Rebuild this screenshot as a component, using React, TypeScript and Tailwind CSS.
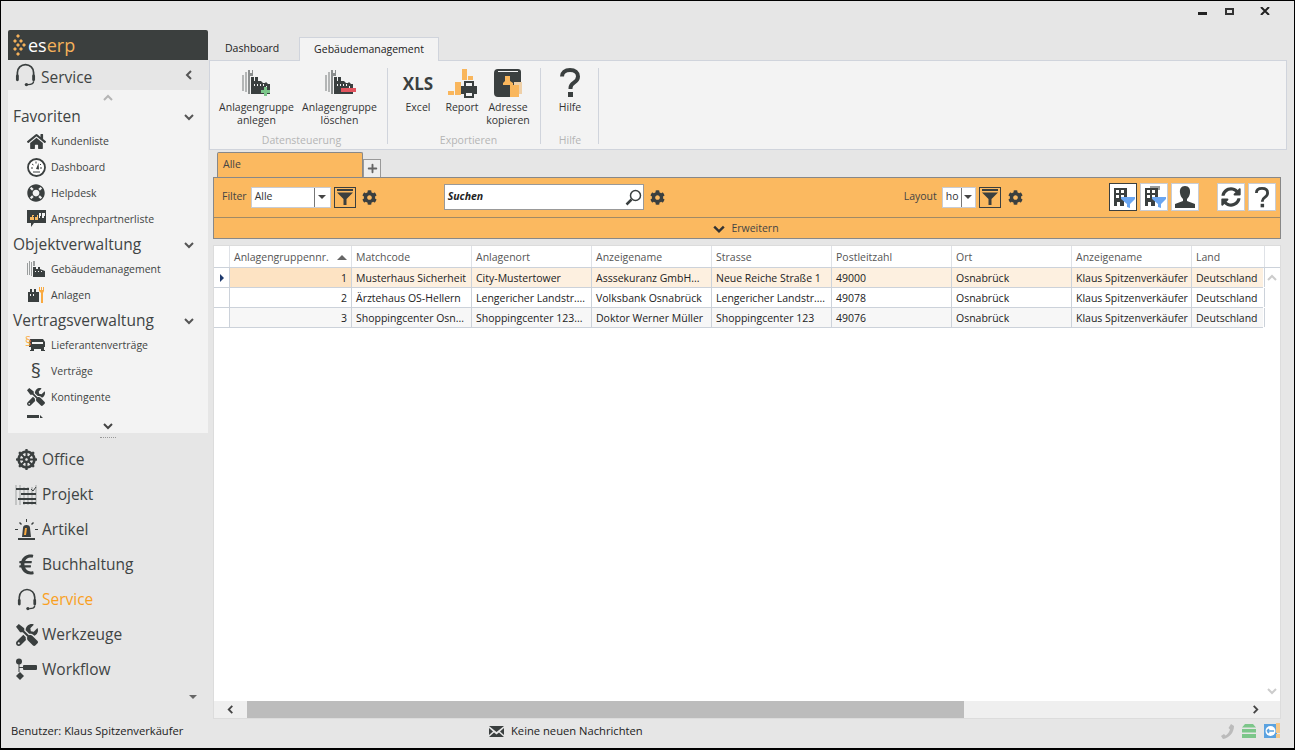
import type { ReactNode } from "react";
import { Plus } from "lucide-react";
import { FaCog, FaDharmachakra, FaEuroSign, FaHome, FaLifeRing, FaSyncAlt, FaTools } from "react-icons/fa";

const DARK = "#3a3f3f";
const ORANGE = "#fbb960";

const Chevron = ({ dir = "down", color = "#555", size = 10 }: { dir?: "down" | "up" | "left" | "right"; color?: string; size?: number }) => {
  const d = { down: "M1 3l4 4 4-4", up: "M1 7l4-4 4 4", left: "M7 1L3 5l4 4", right: "M3 1l4 4-4 4" }[dir];
  return (
    <svg width={size} height={size} viewBox="0 0 10 10" fill="none" stroke={color} strokeWidth="2">
      <path d={d} />
    </svg>
  );
};

const Headset = ({ size = 22, color = DARK }: { size?: number; color?: string }) => (
  <svg width={size} height={size * 1.150} viewBox="0 0 22 25" fill="none" stroke={color}>
    <path d="M2.500 14V10a8.500 8.500 0 0 1 17 0v4" strokeWidth="1.800" />
    <path d="M19.500 19q0 3.500-6 3.500" strokeWidth="1.500" />
    <rect x="1" y="12" width="3" height="7" rx="1.500" fill={color} stroke="none" />
    <rect x="18" y="12" width="3" height="7" rx="1.500" fill={color} stroke="none" />
    <circle cx="12" cy="22.500" r="1.800" fill={color} stroke="none" />
  </svg>
);

const HelpMark = ({ width, height }: { width: number; height: number }) => (
  <svg width={width} height={height} viewBox="0 0 20 30" fill="none" stroke={DARK}>
    <path d="M2 8.500C2 4.500 5 2 10 2s8 2.500 8 6.500c0 3-1.500 4.500-4 6.200-2.300 1.500-3.500 2.800-3.500 5.300v1" strokeWidth="4" />
    <path d="M8 24h5v5H8z" fill={DARK} stroke="none" />
  </svg>
);

const Factory = ({ accent }: { accent?: ReactNode }) => (
  <svg width="32" height="29" viewBox="0 0 32 29">
    <path d="M1 6h2v16H1zM4 3h2v20H4z" fill="#b4b6b6" />
    <path d="M7 1h2v3h2V1h1v6H9v18H7z" fill="#8b8e8e" />
    <path d="M10 8h3v4h1V8h3v4h3l2 2h2l1-1 2 2h2v10H10z" fill={DARK} />
    <path d="M13 15h1v2h-1zM16 15h1v2h-1zM19 15h1v2h-1zM22 15h1v2h-1zM25 17h1v2h-1z" fill="#f3f3f3" />
    {accent}
  </svg>
);

const SmallFactory = () => (
  <svg width="20" height="18" viewBox="0 0 20 18">
    <path d="M1 3h1v12H1zM3 1h1v14H3zM5 2h1v14H5zM7 1h2v5H7z" fill="#9a9d9d" />
    <path d="M7 7h3v2h2V7h2v2l5 2v6H7z" fill={DARK} />
    <path d="M9 11h1v1H9zM12 11h1v1h-1zM15 11h1v1h-1z" fill="#f3f3f3" />
  </svg>
);

const Funnel = ({ size = 16, color = DARK }: { size?: number; color?: string }) => (
  <svg width={size} height={size} viewBox="0 0 16 16">
    <path d="M0 0h16v2H0zM0 3.500h16L9.500 10v6h-3v-6z" fill={color} />
  </svg>
);

const FunnelButton = () => (
  <div className="flex h-[21px] w-[22px] items-center justify-center border border-[#3a3f3f]">
    <Funnel />
  </div>
);

const Gear = () => <FaCog size={15} color={DARK} />;

const Dropdown = ({ label, width, arrowWidth }: { label: string; width: string; arrowWidth: string }) => (
  <div className={`flex h-[21px] items-center border border-[#c8ccd4] bg-white text-[10.500px] text-[#333] ${width}`}>
    <span className="flex-1 overflow-hidden pl-[3px]">{label}</span>
    <span className={`flex h-full items-center justify-center border-l border-[#777] ${arrowWidth}`}>
      <span className="h-0 w-0 border-x-[4px] border-t-[4px] border-x-transparent border-t-[#444]" />
    </span>
  </div>
);

const RibbonButton = ({ icon, lines, width }: { icon: ReactNode; lines: string[]; width: string }) => (
  <div className={`flex flex-col items-center ${width}`}>
    <div className="flex h-[30px] items-center justify-center">{icon}</div>
    <div className="mt-[3px] text-center text-[10.500px] leading-[13px] text-[#333]">
      {lines.map((l) => (
        <div key={l}>{l}</div>
      ))}
    </div>
  </div>
);

const RibbonGroup = ({ title, width, children }: { title: string; width: string; children: ReactNode }) => (
  <div className={`relative flex h-[80px] flex-col ${width}`}>
    <div className="flex h-[64px]">{children}</div>
    <div className="text-center text-[10.500px] leading-[16px] text-[#b5b5b5]">{title}</div>
    <span className="absolute bottom-[4px] right-0 top-0 w-px bg-[#d0d4dc]" />
  </div>
);

const navIcon = {
  home: <FaHome size={19} color={DARK} />,
  gauge: (
    <svg width="19" height="19" viewBox="0 0 19 19">
      <circle cx="9.500" cy="9.500" r="8.500" fill="#fff" stroke={DARK} strokeWidth="1.800" />
      <path d="M9 11l2.500-6 0.500 6.500z" fill={DARK} />
      <path d="M4 10h2M5 6l1.500 1M9 3.500v2M14 6l-1 1M13 10h2M6 14h7" stroke={DARK} fill="none" />
    </svg>
  ),
  ring: <FaLifeRing size={18} color={DARK} />,
  quote: (
    <svg width="19" height="18" viewBox="0 0 19 18">
      <path d="M0 0h19v13H7l-3 4v-4H0z" fill={DARK} />
      <path d="M3 7h2V5h2v1H6v1h1v3H3zM8 7h2V5h1v2h0v3H8z" fill={ORANGE} />
      <path d="M12 3h2v3h-1v2h-1zM15 3h3v3h-1v2h-2z" fill="#f3f3f3" />
    </svg>
  ),
  factory: <SmallFactory />,
  plant: (
    <svg width="19" height="18" viewBox="0 0 19 18">
      <path d="M1 6h2V3h2v3h2V3h2v3h3v10H1z" fill={DARK} />
      <path d="M3 8h1v2H3zM6 8h1v2H6z" fill="#f3f3f3" />
      <path d="M13 1v3h1V1h1v3h1V1h1v4l-1 2v10h-2V7l-2-2V1z" fill="#f9a93f" />
    </svg>
  ),
  truck: (
    <div className="relative h-[18px] w-[20px]">
      <svg className="absolute left-[2px] top-[3px]" width="18" height="15" viewBox="0 0 18 15">
        <path d="M2 0h13l2 3v5h-1v3h1v1h-4v-2H6v2H2v-1h1V8H1V3z" fill={DARK} />
        <path d="M4 3h11v2H4z" fill="#f3f3f3" />
      </svg>
      <span className="absolute left-[-1px] top-[-1px] text-[12px] leading-[14px] text-[#f9a93f]">§</span>
    </div>
  ),
  par: <span className="text-[20px] leading-[20px] text-[#3a3f3f]">§</span>,
  tools: <FaTools size={18} color={DARK} />,
  next: (
    <svg width="18" height="18" viewBox="0 0 18 18">
      <path d="M0 1h12v7H0zM13 1l5 5h-5z" fill={DARK} />
    </svg>
  ),
};

const NavItem = ({ icon, label }: { icon: ReactNode; label: string }) => (
  <div className="flex h-[26px] items-center">
    <div className="flex w-[43px] justify-end pr-[4px]">
      <div className="flex w-[22px] justify-center">{icon}</div>
    </div>
    <span className="pt-[2px] text-[10.500px] text-[#3f4444]">{label}</span>
  </div>
);

const NavGroup = ({ label, className }: { label: string; className: string }) => (
  <div className={`flex items-center justify-between pl-[5px] pr-[14px] text-[15.500px] text-[#3f4444] ${className}`}>
    <span>{label}</span>
    <Chevron />
  </div>
);

const bottomNav: { label: string; icon: ReactNode; color?: string }[] = [
  { label: "Office", icon: <FaDharmachakra size={21} color={DARK} /> },
  {
    label: "Projekt",
    icon: (
      <svg width="23" height="22" viewBox="0 0 23 22" fill="none" stroke={DARK}>
        <path d="M1 1v20M5 1v20M9 3v18M13 3v18M17 3v18M21 1v20" stroke="#a0a3a3" />
        <path d="M1 5h13M6 10h15M3 15h18M8 19h13" strokeWidth="2" />
        <path d="M16 5l2 2 3-4" />
      </svg>
    ),
  },
  {
    label: "Artikel",
    icon: (
      <svg width="23" height="22" viewBox="0 0 23 22">
        <path d="M7 18l1-9q0-3 3.500-3t3.500 3l1 9z" fill={DARK} />
        <path d="M10 9h2l-1 7h-2z" fill="#f9a93f" />
        <path d="M3 19h17v2H3zM0 10h3v1H0zM20 10h3v1h-3zM11 0h1v3h-1zM4 4l1-1 2 2-1 1zM19 4l-1-1-2 2 1 1z" fill={DARK} />
      </svg>
    ),
  },
  { label: "Buchhaltung", icon: <FaEuroSign size={23} color={DARK} /> },
  { label: "Service", icon: <Headset size={20} />, color: "text-[#f9a01e]" },
  { label: "Werkzeuge", icon: <FaTools size={22} color={DARK} /> },
  {
    label: "Workflow",
    icon: (
      <svg width="23" height="23" viewBox="0 0 23 23">
        <circle cx="4" cy="3.500" r="3" fill={DARK} />
        <path d="M8 8a1 1 0 0 1 1-1h12a1 1 0 0 1 1 1v3a1 1 0 0 1-1 1H9a1 1 0 0 1-1-1zM1 18l4-4 4 4-4 4zM3.500 6h1v8h-1zM4 9h4v1H4z" fill={DARK} />
      </svg>
    ),
  },
];

const colGrid = "grid-cols-[16px_122px_120px_120px_120px_120px_120px_120px_120px_73px]";

const headers = ["", "Anlagengruppennr.", "Matchcode", "Anlagenort", "Anzeigename", "Strasse", "Postleitzahl", "Ort", "Anzeigename", "Land"];

const rows = [
  ["1", "Musterhaus Sicherheit", "City-Mustertower", "Asssekuranz GmbH...", "Neue Reiche Straße 1", "49000", "Osnabrück", "Klaus Spitzenverkäufer", "Deutschland"],
  ["2", "Ärztehaus OS-Hellern", "Lengericher Landstr....", "Volksbank Osnabrück", "Lengericher Landstr....", "49078", "Osnabrück", "Klaus Spitzenverkäufer", "Deutschland"],
  ["3", "Shoppingcenter Osn...", "Shoppingcenter 123...", "Doktor Werner Müller", "Shoppingcenter 123", "49076", "Osnabrück", "Klaus Spitzenverkäufer", "Deutschland"],
];

const rowBg = ["bg-[#fdf0e0]", "bg-white", "bg-[#f7f7f7]"];

const ToolButton = ({ children, active }: { children: ReactNode; active?: boolean }) => (
  <div className={`flex h-[28px] w-[28px] items-center justify-center bg-white ${active ? "border border-[#3a3f3f]" : "border border-[#c8ccd4]"}`}>
    {children}
  </div>
);

const Building = ({ ghost }: { ghost?: boolean }) => (
  <svg width="24" height="22" viewBox="0 0 24 22">
    {ghost && <path d="M8 0h10v4H8zM6 3h2v5H6z" fill="#9a9d9d" />}
    <path d="M3 2h13v9h-3v9H9v-4H6v4H3z" fill={DARK} />
    <path d="M5 4h3v3H5zM10 4h3v3h-3zM5 9h3v3H5zM10 9h3v3h-3z" fill="#fff" />
    <path d="M10 11h14v2l-5 5v4l-3-1v-3l-6-5z" fill="#6aa6f2" />
  </svg>
);

export default function App() {
  return (
    <div
      className="flex h-[750px] w-[1295px] flex-col overflow-hidden border border-b-2 border-black bg-[#e6e6e6]"
      style={{ fontFamily: "'Open Sans', sans-serif" }}
    >
      {/* title bar */}
      <div className="flex h-[29px] shrink-0 items-start justify-end pr-[24px] pt-[6px]">
        <div className="mt-[5px] h-[3px] w-[9px] bg-[#222]" />
        <div className="ml-[18px] mt-[1px] h-[7px] w-[9px] border-2 border-[#333] bg-[#e6e6e6]" />
        <svg className="ml-[26px]" width="10" height="8" viewBox="0 0 10 8" stroke="#222" strokeWidth="2">
          <path d="M1 0l8 8M9 0L1 8" />
        </svg>
      </div>

      <div className="flex min-h-0 flex-1">
        {/* sidebar */}
        <div className="flex w-[208px] shrink-0 flex-col pl-[7px] pr-[1px]">
          <div className="flex h-[30px] shrink-0 items-center rounded-t-[2px] bg-[#3b3f3e] pl-[4px]">
            <svg width="15" height="24" viewBox="0 0 15 24" fill="#f5b15a">
              <path d="M4 3l2-2 2 2-2 2zM1 8l2-2 2 2-2 2zM7 8l2-2 2 2-2 2zM4 12l2-2 2 2-2 2zM10 12l2-2 2 2-2 2zM1 16l2-2 2 2-2 2zM7 16l2-2 2 2-2 2zM4 21l2-2 2 2-2 2z" />
            </svg>
            <span className="ml-[1px] text-[18px] leading-none text-white">es</span>
            <span className="text-[18px] leading-none text-[#f5b15a]">erp</span>
          </div>
          <div className="flex h-[30px] shrink-0 items-center justify-between pl-[7px] pr-[14px]">
            <div className="flex items-center">
              <Headset size={21} />
              <span className="ml-[5px] pt-[4px] text-[15.500px] leading-[20px] text-[#3f4444]">Service</span>
            </div>
            <Chevron dir="left" />
          </div>
          <div className="flex h-[343px] shrink-0 flex-col bg-[#f3f3f3]">
            <div className="flex h-[15px] shrink-0 items-center justify-center">
              <Chevron dir="up" color="#b5b5b5" />
            </div>
            <div className="min-h-0 flex-1 overflow-hidden">
              <NavGroup label="Favoriten" className="h-[23px]" />
              <NavItem icon={navIcon.home} label="Kundenliste" />
              <NavItem icon={navIcon.gauge} label="Dashboard" />
              <NavItem icon={navIcon.ring} label="Helpdesk" />
              <NavItem icon={navIcon.quote} label="Ansprechpartnerliste" />
              <NavGroup label="Objektverwaltung" className="h-6 pt-[2px]" />
              <NavItem icon={navIcon.factory} label="Gebäudemanagement" />
              <NavItem icon={navIcon.plant} label="Anlagen" />
              <NavGroup label="Vertragsverwaltung" className="h-6 pt-[2px]" />
              <NavItem icon={navIcon.truck} label="Lieferantenverträge" />
              <NavItem icon={navIcon.par} label="Verträge" />
              <NavItem icon={navIcon.tools} label="Kontingente" />
              <NavItem icon={navIcon.next} label="" />
            </div>
            <div className="flex h-[15px] shrink-0 items-center justify-center">
              <Chevron dir="down" color="#444" />
            </div>
          </div>
          <div className="flex h-[9px] shrink-0 items-center justify-center">
            <div className="h-px w-[16px] border-t border-dotted border-[#999]" />
          </div>
          <div className="flex flex-col pl-[7px]">
            {bottomNav.map((n) => (
              <div key={n.label} className="flex h-[35px] items-center">
                <div className="flex w-[23px] justify-center">{n.icon}</div>
                <span className={`ml-[4px] text-[15.500px] ${n.color ?? "text-[#3f4444]"}`}>{n.label}</span>
              </div>
            ))}
          </div>
          <div className="mt-[8px] flex justify-end pr-[11px]">
            <span className="h-0 w-0 border-x-[4px] border-t-[4px] border-x-transparent border-t-[#666]" />
          </div>
        </div>

        {/* main */}
        <div className="flex min-w-0 flex-1 flex-col pr-[7px] pt-[7px]">
          <div className="flex h-[23px] shrink-0 items-end">
            <div className="flex h-[23px] w-[90px] items-center pl-[16px] text-[10.500px] text-[#222]">Dashboard</div>
            <div className="-mb-px z-10 flex h-[24px] w-[140px] items-center justify-center border border-b-0 border-[#d0d4dc] bg-[#f3f3f3] text-[10.500px] text-[#222]">
              Gebäudemanagement
            </div>
          </div>
          <div className="flex h-[90px] shrink-0 border border-[#d0d4dc] bg-[#f3f3f3] pt-[7px]">
            <RibbonGroup title="Datensteuerung" width="w-[178px] pl-[5px]">
              <RibbonButton width="w-[83px]" lines={["Anlagengruppe", "anlegen"]} icon={<Factory accent={<path d="M23 18h3v3h3v3h-3v3h-3v-3h-3v-3h3z" fill="#7cc68a" />} />} />
              <RibbonButton width="w-[83px]" lines={["Anlagengruppe", "löschen"]} icon={<Factory accent={<path d="M17 19h15v4H17z" fill="#e2545e" />} />} />
            </RibbonGroup>
            <RibbonGroup title="Exportieren" width="w-[153px] pl-[8px]">
              <RibbonButton width="w-[44px]" lines={["Excel"]} icon={<span className="text-[17px] font-bold leading-none text-[#3a3f3f]">XLS</span>} />
              <RibbonButton
                width="w-[44px]"
                lines={["Report"]}
                icon={
                  <svg width="31" height="30" viewBox="0 0 31 30">
                    <path d="M1 23h6v4H1zM8 14h6v13H8zM15 1h5v11h-5zM21 8h5v4h-5z" fill="#f9b65c" />
                    <path d="M17 13h10v5h3v8h-3v4H17v-4h-3v-8h3z" fill={DARK} />
                    <path d="M19 15h6v3h-6zM19 25h6v3h-6z" fill="#f3f3f3" />
                  </svg>
                }
              />
              <RibbonButton
                width="w-[48px]"
                lines={["Adresse", "kopieren"]}
                icon={
                  <svg width="30" height="30" viewBox="0 0 30 30">
                    <path d="M5 1h20a3 3 0 0 1 3 3v13H17v12H5a4 4 0 0 1-4-4V5a4 4 0 0 1 4-4z" fill={DARK} />
                    <path d="M5 3h20v1H5z" fill="#f3f3f3" />
                    <path d="M12 8h5v5l3 2v2H10v-2l2-2z" fill="#f9b65c" />
                    <path d="M21 14h8v12h-8z" fill="#efd0a8" />
                    <path d="M17 17h9v12h-9z" fill="#f9b65c" />
                  </svg>
                }
              />
            </RibbonGroup>
            <RibbonGroup title="Hilfe" width="w-[58px]">
              <RibbonButton width="w-[60px]" lines={["Hilfe"]} icon={<HelpMark width={20} height={30} />} />
            </RibbonGroup>
          </div>

          {/* sub tabs */}
          <div className="ml-[8px] mt-[2px] flex h-[25px] shrink-0 items-end">
            <div className="flex h-[25px] w-[146px] items-start rounded-t-[2px] border border-b-0 border-[#888] bg-[#fbb960] pl-[5px] pt-[4px] text-[10.500px] text-[#444]">
              Alle
            </div>
            <div className="flex h-[18px] w-[18px] items-center justify-center border border-b-0 border-[#999] bg-[#eee]">
              <Plus size={13} color="#666" strokeWidth={3.500} />
            </div>
          </div>

          {/* orange toolbar */}
          <div className="ml-[4px] mr-[6px] flex h-[62px] shrink-0 flex-col border border-[#888] bg-[#fbb960]">
            <div className="flex h-[40px] shrink-0 items-center border-b border-[#a08a66] pb-[1px] pl-[8px]">
              <span className="text-[10.500px] text-[#444]">Filter</span>
              <div className="ml-[4px]">
                <Dropdown label="Alle" width="w-[80px]" arrowWidth="w-[16px]" />
              </div>
              <div className="ml-[3px]">
                <FunnelButton />
              </div>
              <div className="ml-[6px]">
                <Gear />
              </div>
              <div className="ml-[67px] flex h-[26px] w-[200px] items-center border border-[#999] bg-white pl-[3px] pr-[1px] text-[10.500px] font-bold italic text-[#222]">
                <span className="flex-1">Suchen</span>
                <svg width="17" height="17" viewBox="0 0 17 17" fill="none" stroke={DARK}>
                  <circle cx="10.500" cy="6.500" r="5" strokeWidth="1.500" />
                  <path d="M6.500 10.500L1.500 15.500" strokeWidth="2.500" />
                </svg>
              </div>
              <div className="ml-[6px]">
                <Gear />
              </div>
              <span className="ml-[239px] text-[10.500px] text-[#444]">Layout</span>
              <div className="ml-[5px]">
                <Dropdown label="ho" width="w-[34px]" arrowWidth="w-[14px]" />
              </div>
              <div className="ml-[3px]">
                <FunnelButton />
              </div>
              <div className="ml-[7px]">
                <Gear />
              </div>
              <div className="ml-[86px] flex gap-[3px]">
                <ToolButton active>
                  <Building />
                </ToolButton>
                <ToolButton>
                  <Building ghost />
                </ToolButton>
                <ToolButton>
                  <svg width="24" height="22" viewBox="0 0 24 22">
                    <path d="M12 0c4 0 5.500 3 5 7-.3 2.500-1.500 4.500-3 6v2l8 3v4H2v-4l8-3v-2c-1.500-1.500-2.700-3.500-3-6-.5-4 1-7 5-7z" fill={DARK} />
                  </svg>
                </ToolButton>
              </div>
              <div className="ml-[18px] flex gap-[3px]">
                <ToolButton>
                  <FaSyncAlt size={20} color={DARK} />
                </ToolButton>
                <ToolButton>
                  <HelpMark width={14} height={21} />
                </ToolButton>
              </div>
            </div>
            <div className="flex flex-1 items-center justify-center gap-[6px] pr-[2px] pt-[1px] text-[10.500px] text-[#444]">
              <Chevron color="#333" size={12} />
              Erweitern
            </div>
          </div>

          {/* table */}
          <div className="ml-[4px] mr-[6px] mt-[6px] flex min-h-0 flex-1 flex-col border border-[#dcdcdc] bg-white">
            <div className={`grid h-[22px] shrink-0 border-b border-[#ccd2da] text-[10.500px] text-[#555] ${colGrid}`}>
              {headers.map((h, i) => (
                <div key={i} className="flex items-center justify-between border-r border-[#dfe2e7] pl-[4px] pr-[4px] pt-[2px]">
                  <span className="whitespace-nowrap">{h}</span>
                  {i === 1 && <span className="h-0 w-0 border-x-[5px] border-b-[5px] border-x-transparent border-b-[#666]" />}
                </div>
              ))}
            </div>
            <div className="flex min-h-0 flex-1">
              <div className="min-w-0 flex-1">
                {rows.map((r, ri) => (
                  <div key={r[0]} className={`grid h-[20px] border-b border-[#ccd2da] text-[10.500px] text-[#222] ${colGrid} ${rowBg[ri]}`}>
                    <div className="flex items-center justify-center border-r border-[#ccd2da] bg-white">
                      {ri === 0 && <span className="h-0 w-0 border-y-[4px] border-l-[4px] border-y-transparent border-l-[#1f3a6e]" />}
                    </div>
                    {r.map((c, ci) => (
                      <div
                        key={ci}
                        className={`flex items-center overflow-hidden whitespace-nowrap border-r border-[#ccd2da] px-[4px] pt-[2px] ${ci === 0 ? "justify-end" : ""} ${ci === 0 && ri === 0 ? "bg-[#fde3c3]" : ""}`}
                      >
                        {c}
                      </div>
                    ))}
                  </div>
                ))}
              </div>
              <div className="flex w-[17px] shrink-0 flex-col items-center justify-between py-[5px]">
                <Chevron dir="up" color="#ccc" />
                <Chevron dir="down" color="#ccc" />
              </div>
            </div>
            <div className="flex h-[17px] shrink-0 items-center bg-[#efefef] pr-[20px]">
              <div className="flex w-[33px] justify-center">
                <Chevron dir="left" color="#444" size={9} />
              </div>
              <div className="h-full w-[717px] bg-[#bcbcbc]" />
              <div className="flex-1" />
              <Chevron dir="right" color="#444" size={9} />
            </div>
          </div>
        </div>
      </div>

      {/* status bar */}
      <div className="flex h-[29px] shrink-0 items-center pb-[5px] pl-[10px] pr-[14px] text-[11.200px] text-[#222]">
        <span className="w-[478px]">Benutzer: Klaus Spitzenverkäufer</span>
        <svg width="15" height="11" viewBox="0 0 15 11">
          <path d="M0 0h15L7.500 6zM0 2l4 3.500L0 9zM15 2l-4 3.500L15 9zM0 11l5-4.500 2.500 2 2.500-2 5 4.500z" fill={DARK} />
        </svg>
        <span className="ml-[7px] flex-1">Keine neuen Nachrichten</span>
        <svg width="15" height="15" viewBox="0 0 15 15" fill="#bbb">
          <path d="M11 0l3 2c0 7-5 12-11 13l-2-3 3-2 1.500 1.500c2-1 4-3.500 4.500-6L8.500 4z" />
        </svg>
        <svg className="ml-[7px]" width="14" height="14" viewBox="0 0 14 14" fill="#7cc68a">
          <path d="M3 0h8l3 3.500H0zM0 5h14v3.500H0zM0 10h14v4H0z" />
        </svg>
        <svg className="ml-[8px]" width="16" height="16" viewBox="0 0 16 16">
          <rect x="0" y="1" width="13" height="14" fill="#5aa2e0" />
          <circle cx="6.500" cy="8" r="5" fill="#fff" />
          <path d="M3 8h7M3 8l2-2M3 8l2 2" stroke="#5aa2e0" strokeWidth="1.500" fill="none" />
          <path d="M12 0h4v10h-4zM12 11h4v4h-4z" fill="#f5c88a" />
        </svg>
      </div>
    </div>
  );
}
